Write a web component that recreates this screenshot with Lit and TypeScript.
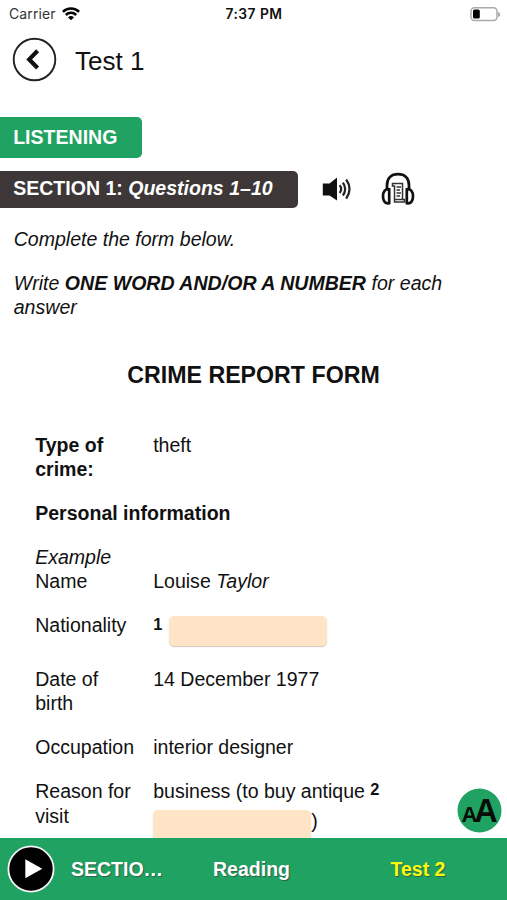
import { LitElement, html, css } from "lit";
import { customElement } from "lit/decorators.js";

@customElement("status-bar")
class StatusBar extends LitElement {
  static styles = css`
    :host { display: grid; grid-template-columns: 1fr auto 1fr; align-items: center; height: 28px; padding: 0 7px 0 9px; box-sizing: border-box; font-family: Inter, sans-serif; font-size: 14px; color: #111; }
    .left { display: flex; align-items: center; gap: 6px; color: #333; letter-spacing: 0.1px; }
    .time { font-weight: 600; font-size: 13.8px; letter-spacing: 0.45px; margin-right: 1px; color: #111; }
    .battery { justify-self: end; }
    svg { display: block; }
  `;
  render() {
    return html`
      <div class="left">
        <span>Carrier</span>
        <svg width="18" height="14" viewBox="0 0 18 14" fill="none" stroke="#000" stroke-width="2.5">
          <path d="M0.9 4.800A11.500 11.500 0 0 1 17.100 4.800" />
          <path d="M3.800 8A7.400 7.400 0 0 1 14.200 8" />
          <path d="M9 13.300L6 10.400A4.300 4.300 0 0 1 12 10.400Z" fill="#000" stroke="none" />
        </svg>
      </div>
      <div class="time">7:37 PM</div>
      <svg class="battery" width="30" height="15" viewBox="0 0 30 15">
        <rect x="1" y="0.8" width="26" height="12.6" rx="3.4" fill="#fff" stroke="#aaa" stroke-width="1.5" />
        <rect x="3" y="2.600" width="6.800" height="9" rx="1.600" fill="#000" />
        <path d="M28 5V10Q30.500 9 30.500 7.500T28 5Z" fill="#aaa" />
      </svg>
    `;
  }
}

@customElement("bottom-bar")
class BottomBar extends LitElement {
  static styles = css`
    :host { display: grid; grid-template-columns: 71px 96px 1fr 178px; align-items: center; height: 62px; background: #20a362; color: #fff; font-weight: 700; font-size: 19.5px; text-shadow: 1px 1px 1px rgba(60, 50, 50, 0.6); }
    .play { display: block; margin-left: 7px; }
    .item { text-align: center; }
    .reading { padding-left: 7px; }
    .section { text-align: left; white-space: nowrap; }
    .test { color: #fbfb12; }
  `;
  render() {
    return html`
      <svg class="play" width="48" height="48" viewBox="0 0 48 48">
        <circle cx="24" cy="24" r="22.6" fill="#000" stroke="#f4f4f4" stroke-width="1.8" />
        <path d="M18.300 14.200L35.300 23.700L18.300 33.200Z" fill="#fff" />
      </svg>
      <div class="section">SECTIO…</div>
      <div class="item reading">Reading</div>
      <div class="item test">Test 2</div>
    `;
  }
}

@customElement("app-root")
class AppRoot extends LitElement {
  static styles = css`
    :host { display: flex; flex-direction: column; position: relative; height: 900px; overflow: hidden; background: #fff; color: #111; font-family: "Liberation Sans", Arial, sans-serif; font-size: 19.550px; line-height: 24.400px; }
    status-bar, bottom-bar, .header { flex: none; }
    .header { display: flex; align-items: center; gap: 18px; height: 62px; padding-left: 12px; font-size: 26px; line-height: 30px; }
    .header svg { display: block; }
    .header span { padding-top: 4px; }
    .content { flex: 1; min-height: 0; overflow: hidden; padding-top: 27px; }
    .tag { width: 142px; height: 41px; box-sizing: border-box; padding: 8px 0 0 13.200px; border-radius: 0 5px 5px 0; background: #20a362; color: #fff; font-weight: 700; }
    .section-row { display: flex; align-items: center; margin-top: 12px; height: 38px; }
    .section { width: 298px; height: 37px; box-sizing: border-box; padding: 5px 0 0 13.200px; border-radius: 0 5px 5px 0; background: #3d3837; color: #fff; font-weight: 700; white-space: nowrap; }
    .speaker { margin-left: 24px; }
    .phones { margin-left: 28.500px; }
    .intro { padding: 0 13.700px; margin-top: 19px; font-style: italic; }
    .intro p + p { letter-spacing: 0.025px; }
    p { margin: 0 0 19.500px; }
    h1 { margin: 41.500px 0 0; text-align: center; font-size: 23.200px; line-height: 29px; }
    .form { display: grid; grid-template-columns: 118px 1fr; row-gap: 19.500px; padding: 0 35.200px; margin-top: 42.500px; }
    .wide { grid-column: 1 / -1; }
    .blank { display: inline-block; width: 158px; height: 29.500px; border-radius: 5px; background: #ffe4c7; box-shadow: 0 1px 1px rgba(120, 90, 60, 0.35); }
    .answer { display: flex; height: 34.300px; }
    .answer .num { padding-top: 1.500px; }
    .answer .blank { margin: 3px 0 0 6.600px; }
    .second { display: flex; align-items: flex-start; margin-top: 6.500px; line-height: 22px; }
    .num { font-size: 16.400px; font-weight: 700; line-height: 18px; }
    .raised { position: relative; top: -3px; line-height: 0; }
    .zoom { position: absolute; left: 457px; top: 788px; }
  `;
  render() {
    return html`
      <status-bar></status-bar>
      <div class="header">
        <svg width="45" height="45" viewBox="0 0 45 45" fill="none">
          <circle cx="22.500" cy="22.500" r="20.800" stroke="#222" stroke-width="1.900" />
          <path d="M25.600 13.800L17.200 22.400L25.600 31" stroke="#111" stroke-width="4.200" />
        </svg>
        <span>Test 1</span>
      </div>
      <div class="content">
        <div class="tag">LISTENING</div>
        <div class="section-row">
          <div class="section">SECTION 1: <i>Questions 1–10</i></div>
          <svg class="speaker" width="30" height="26" viewBox="0 0 30 26" fill="none">
            <path d="M0.800 7.500H7.500L15 1.500V24.500L7.500 19.500H0.800Z" fill="#111" />
            <path d="M17.700 9.200Q20.600 13 17.700 17M20.900 6.700Q25.400 13 20.900 19.500M24.200 3.500Q30.900 13 24.200 22.700" stroke="#222" stroke-width="2.200" />
          </svg>
          <svg class="phones" width="34" height="34" viewBox="0 0 34 34" fill="none" stroke="#111">
            <path d="M6 18V13.500C6 6 10.500 2.200 17 2.200S28 6 28 13.500V18" stroke-width="2.700" />
            <path d="M8.200 17.300C4.500 16.500 2 19.500 2 24.500S4.500 32 8.200 31.200ZM25.800 17.300C29.500 16.500 32 19.500 32 24.500S29.500 32 25.800 31.200Z" stroke-width="2.700" />
            <path d="M11.500 11.500H21.500V27.500H23.500V30H13.500V14H11.500Z" stroke="#333" stroke-width="1.500" />
            <path d="M15.500 15H20M15.500 18H19M15.500 21H20M15.500 24H19M13.500 27.500H21.500" stroke="#333" stroke-width="1.400" />
          </svg>
        </div>
        <div class="intro">
          <p>Complete the form below.</p>
          <p>Write <b>ONE WORD AND/OR A NUMBER</b> for each answer</p>
        </div>
        <h1>CRIME REPORT FORM</h1>
        <div class="form">
          <b>Type of<br />crime:</b><span>theft</span>
          <b class="wide">Personal information</b>
          <div><i>Example</i><br />Name</div><div><br />Louise <i>Taylor</i></div>
          <span>Nationality</span>
          <div class="answer"><span class="num">1</span><span class="blank"></span></div>
          <span>Date of<br />birth</span><span>14 December 1977</span>
          <span>Occupation</span><span>interior designer</span>
          <span>Reason for<br />visit</span>
          <div>business (to buy antique <span class="num raised">2</span>
            <div class="second"><span class="blank"></span>)</div>
          </div>
        </div>
      </div>
      <bottom-bar></bottom-bar>
      <svg class="zoom" width="45" height="45" viewBox="0 0 45 45">
        <circle cx="22.500" cy="22.500" r="22" fill="#20a362" />
        <text y="34" font-weight="700" fill="#080d0a"><tspan x="4.600" font-size="22">A</tspan><tspan x="17.300" font-size="32.500">A</tspan></text>
      </svg>
    `;
  }
}
